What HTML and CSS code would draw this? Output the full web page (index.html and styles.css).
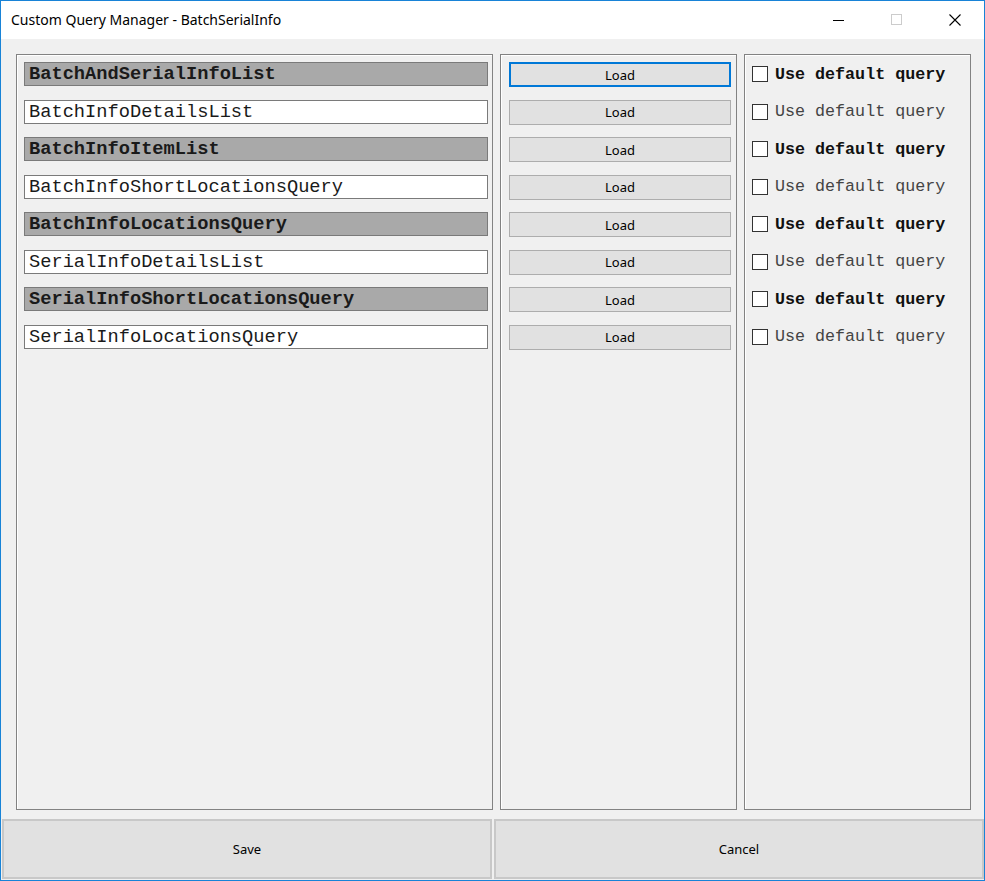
FILE: index.html
```html
<!DOCTYPE html>
<html lang="en">

<head>
    <meta charset="UTF-8">
    <title>Custom Query Manager - BatchSerialInfo</title>
    <link rel="stylesheet" href="styles.css">
</head>

<body>
    <div class="window">
        <div class="titlebar">
            <span class="title">Custom Query Manager - BatchSerialInfo</span>
            <div class="controls">
                <span class="ctl">
                    <svg width="12" height="12" viewBox="0 0 12 12"><path d="M0 6.5H11" stroke="#000" stroke-width="1"/></svg>
                </span>
                <span class="ctl">
                    <svg width="12" height="12" viewBox="0 0 12 12"><rect x="0.5" y="0.5" width="10" height="10" fill="none" stroke="#ccc"/></svg>
                </span>
                <span class="ctl">
                    <svg width="12" height="12" viewBox="0 0 12 12"><path d="M0.5 0.5L11.5 11.5M11.5 0.5L0.5 11.5" stroke="#000" stroke-width="1.1"/></svg>
                </span>
            </div>
        </div>

        <div class="content">
            <div class="panels">
                <div class="panel panel-names">
                    <div class="name bold">BatchAndSerialInfoList</div>
                    <div class="name">BatchInfoDetailsList</div>
                    <div class="name bold">BatchInfoItemList</div>
                    <div class="name">BatchInfoShortLocationsQuery</div>
                    <div class="name bold">BatchInfoLocationsQuery</div>
                    <div class="name">SerialInfoDetailsList</div>
                    <div class="name bold">SerialInfoShortLocationsQuery</div>
                    <div class="name">SerialInfoLocationsQuery</div>
                </div>
                <div class="panel panel-loads">
                    <button class="load focused">Load</button>
                    <button class="load">Load</button>
                    <button class="load">Load</button>
                    <button class="load">Load</button>
                    <button class="load">Load</button>
                    <button class="load">Load</button>
                    <button class="load">Load</button>
                    <button class="load">Load</button>
                </div>
                <div class="panel panel-checks">
                    <label class="check bold"><span class="box"></span>Use default query</label>
                    <label class="check"><span class="box"></span>Use default query</label>
                    <label class="check bold"><span class="box"></span>Use default query</label>
                    <label class="check"><span class="box"></span>Use default query</label>
                    <label class="check bold"><span class="box"></span>Use default query</label>
                    <label class="check"><span class="box"></span>Use default query</label>
                    <label class="check bold"><span class="box"></span>Use default query</label>
                    <label class="check"><span class="box"></span>Use default query</label>
                </div>
            </div>
            <div class="actions">
                <button class="action">Save</button>
                <button class="action">Cancel</button>
            </div>
        </div>
    </div>
</body>

</html>
```

FILE: styles.css
```css
* {
    margin: 0;
    padding: 0;
    box-sizing: border-box;
}

body {
    background: #f0f0f0;
    font-family: 'Noto Sans', 'Open Sans', sans-serif;
}

.window {
    width: 985px;
    height: 881px;
    border: 1px solid #1883d7;
    display: flex;
    flex-direction: column;
}

.titlebar {
    height: 38px;
    background: #fff;
    display: flex;
    align-items: center;
    justify-content: space-between;
    padding-left: 10px;
}

.title {
    font-size: 14px;
    color: #000;
    margin-top: -1px;
}

.controls {
    display: flex;
    height: 100%;
}

.ctl {
    width: 58px;
    display: flex;
    align-items: center;
    justify-content: center;
}

.content {
    flex: 1;
    background: #f0f0f0;
    display: flex;
    flex-direction: column;
    padding-top: 15px;
}

.panels {
    display: flex;
    gap: 7px;
    padding-left: 15px;
    height: 756px;
}

.panel {
    border: 1px solid #828282;
    box-shadow: inset 1px 1px 0 #fff;
    display: flex;
    flex-direction: column;
    gap: 13.5px;
    padding-top: 7px;
}

.panel-names {
    width: 477px;
    padding-left: 7px;
}

.panel-loads {
    width: 237px;
    padding-left: 8px;
    gap: 12.5px;
}

.panel-checks {
    width: 227px;
    padding-left: 7px;
}

.name {
    width: 464px;
    height: 24px;
    background: #fff;
    border: 1px solid #7a7a7a;
    padding-left: 4px;
    font-family: 'Liberation Mono', 'Courier New', monospace;
    font-size: 18.7px;
    line-height: 22px;
    color: #1a1a1a;
    white-space: nowrap;
}

.name.bold {
    background: #a9a9a9;
    font-weight: bold;
}

.load {
    width: 222px;
    height: 25px;
    background: #e1e1e1;
    border: 1px solid #adadad;
    font-family: 'Noto Sans', 'Open Sans', sans-serif;
    font-size: 13px;
    color: #000;
}

.load.focused {
    border: 2px solid #0078d7;
}

.check {
    height: 24px;
    display: flex;
    align-items: center;
    font-family: 'Liberation Mono', 'Courier New', monospace;
    font-size: 16.7px;
    color: #444;
    white-space: nowrap;
}

.check.bold {
    font-weight: bold;
    color: #111;
}

.box {
    width: 16px;
    height: 16px;
    background: #fff;
    border: 1px solid #333;
    margin-right: 7px;
}

.actions {
    display: flex;
    gap: 2px;
    padding-left: 1px;
    margin-top: 9px;
}

.action {
    width: 490px;
    height: 60px;
    background: #e1e1e1;
    border: 2px solid #c8c8c8;
    font-family: 'Noto Sans', 'Open Sans', sans-serif;
    font-size: 13px;
    color: #000;
}
```
